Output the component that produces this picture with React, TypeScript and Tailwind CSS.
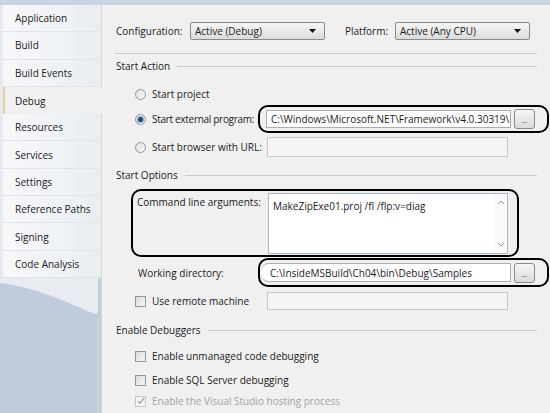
const tabs = ['Application', 'Build', 'Build Events', 'Debug', 'Resources', 'Services', 'Settings', 'Reference Paths', 'Signing', 'Code Analysis']

function Arrow() {
  return (
    <svg width="7" height="4" viewBox="0 0 7 4">
      <path d="M0 0h7L3.5 4z" fill="#111" />
    </svg>
  )
}

function Dropdown({ text }: { text: string }) {
  return (
    <div className="h-[18px] w-[135px] border border-[#8a8a8a] rounded-[2px] bg-linear-to-b from-[#f6f6f6] to-[#dcdcdc] flex items-center justify-between pl-[4px] pr-[8px]">
      <span>{text}</span>
      <Arrow />
    </div>
  )
}

function Radio({ checked }: { checked?: boolean }) {
  return (
    <span className="w-[11px] h-[11px] shrink-0 rounded-full border border-[#8f959b] bg-linear-to-br from-[#dcdfe2] to-[#fbfbfb] flex items-center justify-center">
      {checked && <span className="w-[5px] h-[5px] rounded-full bg-[#254e74] ring-1 ring-[#8db3d4]" />}
    </span>
  )
}

function Check({ disabled }: { disabled?: boolean }) {
  if (disabled)
    return (
      <span className="w-[11px] h-[11px] shrink-0 border border-[#c4c4c4] bg-[#f4f4f4] flex items-center justify-center">
        <svg width="8" height="8" viewBox="0 0 8 8">
          <path d="M1 4.2l2 2L7 1" stroke="#a8a8a8" strokeWidth="1.3" fill="none" />
        </svg>
      </span>
    )
  return <span className="w-[11px] h-[11px] shrink-0 border border-[#8f959b] bg-linear-to-br from-[#d6d9dc] to-[#f8f8f8]" />
}

function Header({ title }: { title: string }) {
  return (
    <div className="h-[14px] flex items-center pl-[14px] pr-[13px]">
      <span>{title}</span>
      <div className="flex-1 h-px bg-[#c9c9c9] ml-[7px]" />
    </div>
  )
}

function Dots() {
  return (
    <div className="w-[21px] h-[20px] shrink-0 border border-[#8a8a8a] rounded-[3px] bg-linear-to-b from-[#f6f6f6] to-[#dadada] flex items-end justify-center pb-[4px] text-[7px] leading-none">
      ...
    </div>
  )
}

export default function App() {
  return (
    <div className="w-[550px] h-[413px] overflow-hidden flex flex-col bg-[#c8d4e2] text-[10px] leading-[14px] text-[#1b1b1b] whitespace-nowrap font-[family-name:Open_Sans,sans-serif]">
      <div className="h-[5px] shrink-0" />
      <div className="flex flex-1 min-h-0">
        {/* tab list */}
        <div className="w-[101px] shrink-0 flex flex-col bg-[#bfccdc]">
          <div className="flex flex-col bg-[#e6eaf0] pl-[3px]">
            {tabs.map((t) =>
              t === 'Debug' ? (
                <div key={t} className="relative z-10 h-[27.3px] w-[99px] bg-[#f0f0f0] border-l-2 border-[#f0cd90] flex items-center pl-[10px]">
                  {t}
                </div>
              ) : (
                <div key={t} className="h-[27.3px] w-[98px] bg-linear-to-r from-[#f7f8fa] to-[#e9edf2] border-b border-[#e1e5ea] flex items-center pl-[12px]">
                  {t}
                </div>
              )
            )}
          </div>
          <svg width="101" height="40" viewBox="0 0 101 40" className="shrink-0">
            <path d="M0 0H98V33Q98 37 94 35.5C70 26 40 10 0 5Z" fill="#e8ecf1" />
          </svg>
          <div className="flex-1 flex justify-end">
            <div className="w-[2px] mr-[2px] bg-[#ccd6e2]" />
          </div>
        </div>

        {/* panel */}
        <div className="flex-1 min-w-0 bg-[#f0f0f0] border-l border-[#d4d8dd] flex flex-col">
          <div className="h-[18px] mt-[17px] flex items-center pl-[14px]">
            <span className="w-[74px]">Configuration:</span>
            <Dropdown text="Active (Debug)" />
            <span className="ml-[20px] w-[50px]">Platform:</span>
            <Dropdown text="Active (Any CPU)" />
          </div>
          <div className="h-px mt-[13px] mx-[13px] bg-[#c9c9c9]" />

          <div className="mt-[5px]">
            <Header title="Start Action" />
          </div>

          <div className="h-[16px] mt-[13px] flex items-center gap-[6px] pl-[33px]">
            <Radio />
            <span>Start project</span>
          </div>

          <div className="h-[28px] mt-[3px] flex items-center pl-[33px]">
            <Radio checked />
            <span className="ml-[6px] tracking-[-0.3px]">Start external program:</span>
            <div className="ml-auto mr-px w-[291px] shrink-0 h-[28px] border-2 border-black rounded-[10px] flex items-center pl-[6px]">
              <div className="w-[245px] h-[18px] border border-[#abadb3] bg-white flex items-center px-[4px] overflow-hidden">
                {'C:\\Windows\\Microsoft.NET\\Framework\\v4.0.30319\\M'}
              </div>
              <div className="ml-[3px]">
                <Dots />
              </div>
            </div>
          </div>

          <div className="h-[20px] mt-[4px] flex items-center pl-[33px]">
            <Radio />
            <span className="ml-[6px]">Start browser with URL:</span>
            <div className="ml-auto mr-[42px] w-[241px] shrink-0 h-[20px] border border-[#c6c8cc] bg-[#f5f5f5]" />
          </div>

          <div className="mt-[11px]">
            <Header title="Start Options" />
          </div>

          <div className="h-[68px] mt-[7px] ml-[29px] mr-[31px] border-2 border-black rounded-[10px] flex">
            <span className="pl-[4px] pt-[4px]">Command line arguments:</span>
            <div className="ml-auto mr-[9px] mt-[2px] w-[240px] shrink-0 h-[61px] border border-[#a9b7c6] bg-white flex">
              <div className="flex-1 pl-[4px] pt-[5px]">MakeZipExe01.proj /fl /flp:v=diag</div>
              <div className="w-[13px] flex flex-col justify-between items-center py-[6px] bg-[#fafafa]">
                <svg width="6" height="4" viewBox="0 0 6 4">
                  <path d="M0 4L3 1L6 4" stroke="#9a9a9a" fill="none" />
                </svg>
                <svg width="6" height="4" viewBox="0 0 6 4">
                  <path d="M0 0L3 3L6 0" stroke="#9a9a9a" fill="none" />
                </svg>
              </div>
            </div>
          </div>

          <div className="h-[29px] mt-[1px] flex items-center pl-[36px]">
            <span>Working directory:</span>
            <div className="ml-auto mr-px w-[291px] shrink-0 h-[29px] border-2 border-black rounded-[10px] flex items-center pl-[1px]">
              <div className="w-[250px] h-[19px] border border-[#abadb3] border-l-0 rounded-l-[8px] bg-white flex items-center px-[9px] overflow-hidden">
                {'C:\\InsideMSBuild\\Ch04\\bin\\Debug\\Samples'}
              </div>
              <div className="ml-[3px]">
                <Dots />
              </div>
            </div>
          </div>

          <div className="h-[18px] mt-[5px] flex items-center pl-[33px]">
            <Check />
            <span className="ml-[6px]">Use remote machine</span>
            <div className="ml-auto mr-[42px] w-[241px] shrink-0 h-[18px] border border-[#c6c8cc] bg-[#f5f5f5]" />
          </div>

          <div className="mt-[13px]">
            <Header title="Enable Debuggers" />
          </div>

          <div className="h-[16px] mt-[11px] flex items-center gap-[6px] pl-[33px]">
            <Check />
            <span>Enable unmanaged code debugging</span>
          </div>
          <div className="h-[16px] mt-[8px] flex items-center gap-[6px] pl-[33px]">
            <Check />
            <span>Enable SQL Server debugging</span>
          </div>
          <div className="h-[16px] mt-[5px] flex items-center gap-[6px] pl-[33px] text-[#a3a3a3]">
            <Check disabled />
            <span>Enable the Visual Studio hosting process</span>
          </div>
        </div>
      </div>
    </div>
  )
}
